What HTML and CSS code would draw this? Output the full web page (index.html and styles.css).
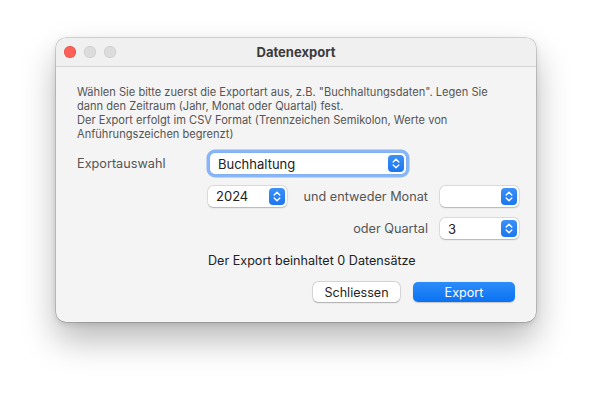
FILE: index.html
```html
<!DOCTYPE html>
<html lang="de">
<head>
<meta charset="utf-8">
<title>Datenexport</title>
<link rel="stylesheet" href="styles.css">
</head>
<body>
<div class="window">
  <div class="titlebar">
    <div class="lights">
      <span class="light red"></span>
      <span class="light"></span>
      <span class="light"></span>
    </div>
    <div class="title">Datenexport</div>
  </div>
  <div class="content">
    <p class="info">Wählen Sie bitte zuerst die Exportart aus, z.B. "Buchhaltungsdaten". Legen Sie dann den Zeitraum (Jahr, Monat oder Quartal) fest.<br>Der Export erfolgt im CSV Format (Trennzeichen Semikolon, Werte von Anführungszeichen begrenzt)</p>
    <div class="form">
      <div class="label first">Exportauswahl</div>
      <div class="popup wide focus"><span class="val">Buchhaltung</span><span class="chev"><svg width="8" height="11" viewBox="0 0 8 11"><path d="M1.2 4 L4 1.3 L6.8 4 M1.2 7 L4 9.7 L6.8 7" fill="none" stroke="#fff" stroke-width="1.4" stroke-linecap="round" stroke-linejoin="round"/></svg></span></div>

      <div class="popup c2"><span class="val">2024</span><span class="chev"><svg width="8" height="11" viewBox="0 0 8 11"><path d="M1.2 4 L4 1.3 L6.8 4 M1.2 7 L4 9.7 L6.8 7" fill="none" stroke="#fff" stroke-width="1.4" stroke-linecap="round" stroke-linejoin="round"/></svg></span></div>
      <div class="label right">und entweder Monat</div>
      <div class="popup"><span class="val"></span><span class="chev"><svg width="8" height="11" viewBox="0 0 8 11"><path d="M1.2 4 L4 1.3 L6.8 4 M1.2 7 L4 9.7 L6.8 7" fill="none" stroke="#fff" stroke-width="1.4" stroke-linecap="round" stroke-linejoin="round"/></svg></span></div>

      <div class="label right c3">oder Quartal</div>
      <div class="popup"><span class="val">3</span><span class="chev"><svg width="8" height="11" viewBox="0 0 8 11"><path d="M1.2 4 L4 1.3 L6.8 4 M1.2 7 L4 9.7 L6.8 7" fill="none" stroke="#fff" stroke-width="1.4" stroke-linecap="round" stroke-linejoin="round"/></svg></span></div>
    </div>
    <div class="count">Der Export beinhaltet 0 Datensätze</div>
    <div class="buttons">
      <button class="btn">Schliessen</button>
      <button class="btn primary">Export</button>
    </div>
  </div>
</div>
</body>
</html>
```

FILE: styles.css
```css
html, body {
  margin: 0;
  padding: 0;
  background: #ffffff;
}
body {
  width: 592px;
  height: 396px;
  padding: 38px 0 0 56px;
  box-sizing: border-box;
  font-family: "Inter", "Liberation Sans", sans-serif;
  overflow: hidden;
}
.window {
  width: 480px;
  height: 284px;
  box-sizing: border-box;
  background: #f4f4f4;
  border-radius: 10px;
  box-shadow: 0 0 0 0.5px rgba(0,0,0,0.28), 0 18px 34px rgba(0,0,0,0.28), 0 2px 6px rgba(0,0,0,0.12);
  overflow: hidden;
  display: flex;
  flex-direction: column;
}
.titlebar {
  height: 28px;
  flex: none;
  background: #f0f0f0;
  border-bottom: 1px solid #d6d6d6;
  display: flex;
  align-items: center;
  position: relative;
}
.lights {
  display: flex;
  gap: 8px;
  padding-left: 8px;
}
.light {
  width: 12px;
  height: 12px;
  border-radius: 50%;
  background: #dcdcdc;
  box-shadow: inset 0 0 0 0.5px rgba(0,0,0,0.12);
}
.light.red {
  background: #fe5f57;
  box-shadow: inset 0 0 0 0.5px rgba(200,40,30,0.5);
}
.title {
  position: absolute;
  left: 0;
  right: 0;
  text-align: center;
  font-size: 13px;
  font-weight: 700;
  color: #3c3c3c;
  pointer-events: none;
}
.content {
  padding: 18px 21px 0 21px;
}
.info {
  margin: 0;
  font-size: 11.1px;
  line-height: 14px;
  color: #555;
  width: 430px;
}
.form {
  margin-top: 12px;
  display: grid;
  grid-template-columns: 131px 79px 153px 79px;
  grid-auto-rows: 21px;
  row-gap: 11.5px;
  align-items: center;
}
.label {
  font-size: 12.7px;
  color: #555;
}
.label.right {
  text-align: right;
  padding-right: 12px;
}
.c2 { grid-column: 2; }
.c3 { grid-column: 3; }
.popup {
  height: 21px;
  background: #fff;
  border-radius: 5px;
  box-shadow: 0 0 0 0.5px rgba(0,0,0,0.14), 0 0.5px 1.5px rgba(0,0,0,0.2);
  display: flex;
  align-items: center;
  justify-content: space-between;
  padding: 0 2px 0 8px;
  box-sizing: border-box;
}
.popup.wide {
  grid-column: 2 / span 2;
  width: 196px;
  margin-left: 2px;
}
.popup.focus {
  box-shadow: 0 0 0 3.5px rgba(100,160,245,0.75), 0 0 0 0.5px rgba(0,0,0,0.14);
}
.val {
  font-size: 13px;
  color: #222;
}
.chev {
  width: 16px;
  height: 17px;
  border-radius: 4px;
  background: linear-gradient(#3b91f7, #1b76f0);
  display: flex;
  align-items: center;
  justify-content: center;
}
.count {
  margin: 14px 0 0 131px;
  font-size: 12.6px;
  color: #222;
}
.buttons {
  margin-top: 14px;
  display: flex;
  justify-content: flex-end;
  gap: 13px;
  padding-right: 0;
}
.btn {
  height: 20px;
  border: none;
  border-radius: 5px;
  background: #fff;
  box-shadow: 0 0 0 0.5px rgba(0,0,0,0.18), 0 0.5px 1.5px rgba(0,0,0,0.22);
  font-family: inherit;
  font-size: 12.6px;
  color: #262626;
  padding: 0;
  width: 87px;
}
.btn.primary {
  width: 102px;
  background: linear-gradient(#2d8cf9, #0a72f2);
  color: #fff;
  box-shadow: 0 0.5px 1px rgba(0,0,0,0.2);
}
```
